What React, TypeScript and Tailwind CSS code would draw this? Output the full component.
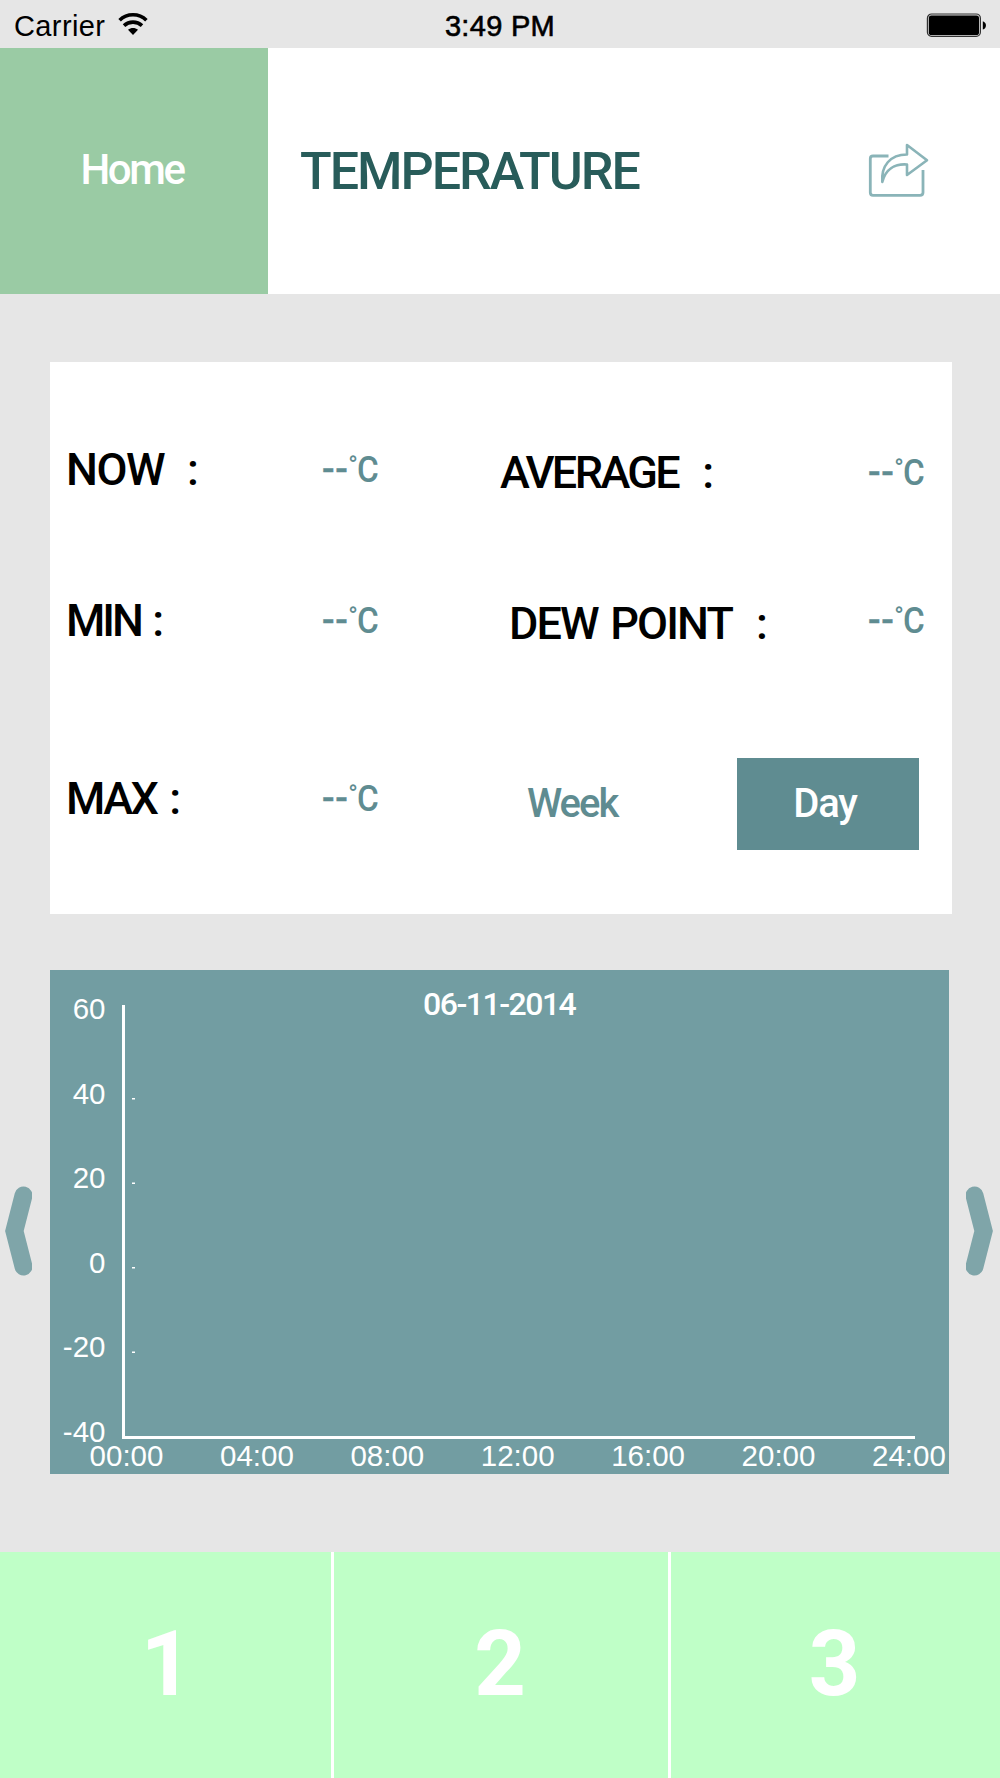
import type { ReactNode } from 'react'

function StatusBar() {
  return (
    <div className="grid h-12 shrink-0 grid-cols-3 items-center font-['Liberation_Sans',sans-serif] text-[29px] leading-none text-black">
      <div className="flex items-center pl-3.5">
        <span className="pt-1 tracking-[0.4px]">Carrier</span>
        <svg className="ml-3 h-6 w-8" viewBox="0 0 32 24" fill="none" stroke="#000" strokeWidth="3.6">
          <path d="M2.6 8.2C10 0.9 22 0.9 29.4 8.2" />
          <path d="M7 13.6C12 8.9 20 8.9 25 13.6" />
          <path d="M11 17.8C14 15.4 18 15.4 21 17.8L16 23Z" fill="#000" stroke="none" />
        </svg>
      </div>
      <span className="pt-1 text-center tracking-[0.3px] [-webkit-text-stroke:0.6px_#000]">3:49 PM</span>
      <svg className="mt-0.5 mr-[13px] h-6 w-[61px] justify-self-end" viewBox="0 0 61 24">
        <rect x="1.4" y="1" width="53" height="22.4" rx="4.2" fill="#d8d8d8" stroke="#333" strokeWidth="1.2" />
        <rect x="2.8" y="2.4" width="50.2" height="19.6" rx="2.6" />
        <path d="M56.8 8.2C61 9.4 61 15.4 56.8 16.6Z" />
      </svg>
    </div>
  )
}

function ShareIcon() {
  return (
    <svg className="h-14 w-16" viewBox="867 142 64 56" fill="none" stroke="#8ab4b8" strokeWidth="2.8" strokeLinejoin="round">
      <path d="M888.5 155H873Q870.3 155 870.3 157.700V191.500Q870.3 194.300 873 194.300H920Q923 194.300 923 191.500V169" />
      <path d="M907 144L927 159.300L907 174V163.500C895 162.600 885.500 168 882.300 181C881 165 890 153.500 907 153.500Z" strokeWidth="2.6" />
    </svg>
  )
}

function Label({ children, className }: { children: ReactNode; className: string }) {
  return <span className={`shrink-0 text-[45px] font-medium whitespace-pre text-black ${className}`}>{children}</span>
}

function Reading() {
  return (
    <span className="flex text-[37px] font-medium text-[#5f8c91]">
      <span className="tracking-[0.6px] [-webkit-text-stroke:0.5px_#5f8c91]">--</span>
      <span className="relative top-0.5 text-[25px]">°</span>
      <span className="-ml-px origin-left scale-x-[0.9]">C</span>
    </span>
  )
}

const yTicks = [60, 40, 20, 0, -20, -40]
const xTicks = ['00:00', '04:00', '08:00', '12:00', '16:00', '20:00', '24:00']

function Chart() {
  return (
    <svg className="h-[504px] w-[899px] bg-[#729da2]" viewBox="0 0 899 504" fill="#fff">
      <text x="373" y="45" className="font-['Roboto',sans-serif] text-[32px] font-medium tracking-[-1.500px]">06-11-2014</text>
      <path d="M73.500 35V467.500H865" fill="none" stroke="#fff" strokeWidth="3" />
      <g className="font-['Liberation_Sans',sans-serif] text-[29.500px]">
        {yTicks.map((v, i) => (
          <text key={v} x="55.500" y={49 + i * 84.5} textAnchor="end">{v}</text>
        ))}
        {xTicks.map((t, i) => (
          <text key={t} x={76.5 + i * 130.4} y="495.500" textAnchor="middle">{t}</text>
        ))}
      </g>
      {yTicks.slice(1, 5).map((v, i) => (
        <rect key={v} x="82" y={128 + i * 84.5} width="3" height="1.500" />
      ))}
    </svg>
  )
}

function Arrow({ className }: { className: string }) {
  return (
    <button className={className}>
      <svg className="h-[90px] w-[27px]" viewBox="0 0 27 90" fill="none" stroke="#7fa5a9" strokeWidth="18" strokeLinecap="round">
        <path d="M18.500 9.500L9.400 45L18.500 80.500" />
      </svg>
    </button>
  )
}

export default function App() {
  return (
    <div className="flex h-[1778px] w-[1000px] flex-col overflow-hidden bg-[#e6e6e6] font-['Roboto',sans-serif] leading-none">
      <StatusBar />
      <header className="flex h-[246px] shrink-0 items-center bg-white">
        <button className="flex h-full w-[268px] items-center justify-center bg-[#9acba4] pr-1 pb-0.5 text-[42px] font-medium tracking-[-2.400px] text-white">Home</button>
        <h1 className="mt-0.5 ml-[32px] text-[52px] font-medium tracking-[-2px] text-[#285c5a]">TEMPERATURE</h1>
        <button className="mr-[69px] ml-auto"><ShareIcon /></button>
      </header>

      <section className="mt-[68px] ml-[50px] flex h-[552px] w-[902px] shrink-0 bg-white">
        <div className="w-[450px] pt-[57px] pl-4">
          <div className="flex h-[100px] items-center"><Label className="w-[256px] tracking-[-1.450px] [word-spacing:1.700px]">{'NOW  :'}</Label><Reading /></div>
          <div className="mt-[51px] flex h-[100px] items-center"><Label className="w-[256px] tracking-[-3px] [word-spacing:3px]">MIN :</Label><Reading /></div>
          <div className="mt-[78px] flex h-[100px] items-center"><Label className="w-[256px] tracking-[-2.500px] [word-spacing:4px]">MAX :</Label><Reading /></div>
        </div>
        <div className="grow pt-[60px]">
          <div className="flex h-[100px] items-center"><Label className="w-[368px] tracking-[-2.600px] [word-spacing:3.500px]">{'AVERAGE  :'}</Label><Reading /></div>
          <div className="mt-12 flex h-[100px] items-center"><Label className="w-[368px] pt-1.5 pl-[9px] tracking-[-1.900px] [word-spacing:3.300px]">{'DEW POINT  :'}</Label><Reading /></div>
          <div className="mt-[84px] flex h-[100px] items-center text-[40px] font-medium">
            <button className="w-[237px] pl-[27px] text-left tracking-[-2px] text-[#5f8c91]">Week</button>
            <button className="h-[92px] w-[182px] bg-[#5f8c91] pr-1.5 tracking-[-1.200px] text-white">Day</button>
          </div>
        </div>
      </section>

      <section className="mt-14 flex h-[504px] shrink-0 items-center">
        <Arrow className="mt-[17px] mr-[18px] ml-[5px] h-[90px]" />
        <Chart />
        <Arrow className="mt-[17px] ml-[17px] h-[90px] rotate-180" />
      </section>

      <nav className="mt-[78px] flex h-[226px] shrink-0 text-[90px] font-bold text-white">
        <button className="w-[334px] border-r-3 border-white bg-[#bfffc7] pl-0.5">1</button>
        <button className="w-[337px] border-r-3 border-white bg-[#bfffc7] pr-0.5">2</button>
        <button className="grow bg-[#bfffc7] pr-0.5">3</button>
      </nav>
    </div>
  )
}
